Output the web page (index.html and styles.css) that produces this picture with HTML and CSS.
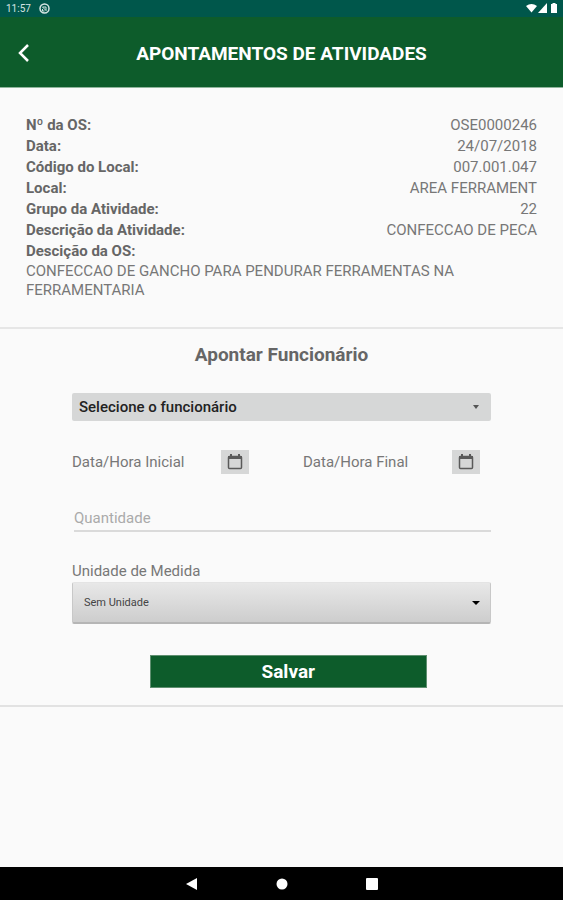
FILE: index.html
```html
<!DOCTYPE html>
<html lang="pt-BR">
<head>
    <meta charset="UTF-8">
    <meta name="viewport" content="width=device-width, initial-scale=1.0">
    <title>Apontamentos de Atividades</title>
    <link rel="stylesheet" href="styles.css">
</head>
<body>
    <div class="status-bar">
        <span>11:57</span>
        <svg class="status-app" width="11" height="11" viewBox="0 0 22 22" fill="none" stroke="#d5e5e3" stroke-width="3">
            <circle cx="11" cy="11" r="9"/>
            <path d="M7 8h7v6M7 8l8 8M7 12v4h4" stroke-width="2"/>
        </svg>
        <svg class="status-icons" width="32" height="11" viewBox="0 0 32 11" fill="#fff">
            <path d="M0 3Q5.500-1 11 3L5.500 9.500z"/>
            <path d="M21 0v10H12z"/>
            <path d="M25 1h1.500V0h3v1H31v9h-6z"/>
        </svg>
    </div>

    <header class="header">
        <button type="button" class="back" aria-label="Voltar">
            <svg width="12" height="20" viewBox="0 0 12 20" fill="none" stroke="#fff" stroke-width="2.500">
                <path d="M10 2L2 10l8 8"/>
            </svg>
        </button>
        <h1>APONTAMENTOS DE ATIVIDADES</h1>
    </header>

    <main>
        <section class="details">
            <dl>
                <div><dt>Nº da OS:</dt><dd>OSE0000246</dd></div>
                <div><dt>Data:</dt><dd>24/07/2018</dd></div>
                <div><dt>Código do Local:</dt><dd>007.001.047</dd></div>
                <div><dt>Local:</dt><dd>AREA FERRAMENT</dd></div>
                <div><dt>Grupo da Atividade:</dt><dd>22</dd></div>
                <div><dt>Descrição da Atividade:</dt><dd>CONFECCAO DE PECA</dd></div>
                <div class="long"><dt>Descição da OS:</dt><dd>CONFECCAO DE GANCHO PARA PENDURAR FERRAMENTAS NA FERRAMENTARIA</dd></div>
            </dl>
        </section>

        <form class="form" action="#" method="POST">
            <h2>Apontar Funcionário</h2>

            <div class="select employee">
                <select name="funcionario" aria-label="Funcionário">
                    <option>Selecione o funcionário</option>
                </select>
                <svg width="8" height="4" viewBox="0 0 8 4" fill="#555"><path d="M1 0h6L4 4z"/></svg>
            </div>

            <div class="dates">
                <div class="date">
                    <label for="inicial">Data/Hora Inicial</label>
                    <button type="button" id="inicial">
                        <svg width="16" height="16" viewBox="0 0 16 16">
                            <rect x="1.500" y="2.500" width="13" height="12" rx="1" fill="none" stroke="#5a5a5a" stroke-width="1.500"/>
                            <path d="M1 2h14v3H1zM3 0h2v2H3zM11 0h2v2h-2z" fill="#5a5a5a"/>
                        </svg>
                    </button>
                </div>
                <div class="date">
                    <label for="final">Data/Hora Final</label>
                    <button type="button" id="final">
                        <svg width="16" height="16" viewBox="0 0 16 16">
                            <rect x="1.500" y="2.500" width="13" height="12" rx="1" fill="none" stroke="#5a5a5a" stroke-width="1.500"/>
                            <path d="M1 2h14v3H1zM3 0h2v2H3zM11 0h2v2h-2z" fill="#5a5a5a"/>
                        </svg>
                    </button>
                </div>
            </div>

            <input type="text" class="quantity" name="quantidade" placeholder="Quantidade" aria-label="Quantidade">

            <label class="unit-label" for="unidade">Unidade de Medida</label>
            <div class="select unit">
                <select id="unidade" name="unidade">
                    <option>Sem Unidade</option>
                </select>
                <svg width="8" height="4" viewBox="0 0 8 4" fill="#000"><path d="M0 0h8L4 4z"/></svg>
            </div>

            <button type="submit" class="save">Salvar</button>
        </form>
    </main>

    <nav class="nav-bar">
        <button type="button" aria-label="Voltar">
            <svg width="12" height="12" viewBox="0 0 12 12" fill="#fff"><path d="M11 0v12L0 6z"/></svg>
        </button>
        <button type="button" aria-label="Início">
            <svg width="12" height="12" viewBox="0 0 12 12" fill="#fff"><circle cx="6" cy="6" r="5.500"/></svg>
        </button>
        <button type="button" aria-label="Recentes">
            <svg width="12" height="12" viewBox="0 0 12 12" fill="#fff"><rect width="12" height="12" rx="1"/></svg>
        </button>
    </nav>
</body>
</html>
```

FILE: styles.css
```css
* {
    box-sizing: border-box;
    margin: 0;
    padding: 0;
}

body {
    font-family: Roboto, sans-serif;
    font-size: 15px;
    color: #777;
    background-color: #fafafa;
    display: flex;
    flex-direction: column;
    min-height: 100vh;
}

button,
input,
select {
    font-family: inherit;
    border: none;
}

svg {
    display: block;
}

.status-bar {
    display: flex;
    align-items: center;
    gap: 8px;
    height: 17px;
    padding: 0 5px 0 6px;
    background-color: #00574b;
    color: #d5e5e3;
    font-size: 10px;
}

.status-icons {
    margin-left: auto;
}

.header {
    display: grid;
    grid-template-columns: 48px 1fr 48px;
    align-items: center;
    height: 71px;
    padding-top: 2px;
    background-color: #0d5c2b;
    border-bottom: 1px solid #8fb59c;
}

.back {
    display: flex;
    justify-content: center;
    padding: 12px;
    background: none;
    cursor: pointer;
}

h1 {
    color: #fff;
    font-size: 19px;
    font-weight: 700;
    text-align: center;
}

main {
    flex: 1;
}

.details {
    padding: 27px 26px;
    border-bottom: 2px solid #e6e6e6;
}

.details div {
    display: flex;
    justify-content: space-between;
    line-height: 21px;
}

.details .long {
    display: block;
}

dt {
    font-weight: 700;
    color: #666;
}

.long dd {
    line-height: 19px;
}

.form {
    display: flex;
    flex-direction: column;
    padding: 14px 72px 17px;
    border-bottom: 2px solid #e2e2e2;
}

h2 {
    color: #666;
    font-size: 19px;
    font-weight: 700;
    line-height: 24px;
    text-align: center;
    margin-bottom: 26px;
}

/* the arrow shares the grid cell of its select */
.select {
    display: grid;
    align-items: center;
}

.select select {
    grid-area: 1 / 1;
    appearance: none;
    width: 100%;
    border-radius: 2px;
}

.select svg {
    grid-area: 1 / 1;
    justify-self: end;
    margin-right: 11px;
    pointer-events: none;
}

.employee select {
    height: 28px;
    padding: 0 7px;
    background-color: #d6d7d7;
    color: #222;
    font-size: 15px;
    font-weight: 500;
}

.dates {
    display: grid;
    grid-template-columns: 177px 177px;
    justify-content: space-between;
    margin: 29px 11px 0 0;
}

.date {
    display: flex;
    align-items: center;
    justify-content: space-between;
}

.date button {
    display: flex;
    align-items: center;
    justify-content: center;
    width: 28px;
    height: 24px;
    background-color: #d6d7d7;
    cursor: pointer;
}

.quantity {
    height: 26px;
    margin: 32px 0 28px 2px;
    background: none;
    border-bottom: 2px solid #dadada;
    color: #555;
    font-size: 15px;
}

.quantity::placeholder {
    color: #aaa;
}

.unit-label {
    line-height: 22px;
}

.unit select {
    height: 42px;
    padding: 0 11px;
    background: linear-gradient(#e8e8e8, #cdcdcd);
    border: 1px solid #c8c8c8;
    border-top-color: #e4e4e4;
    border-bottom: 2px solid #b5b5b5;
    color: #444;
    font-size: 11px;
}

.save {
    width: 66%;
    height: 33px;
    margin: 31px auto 0 78px;
    background-color: #0d5c2b;
    border: 1px solid #5f8f70;
    color: #fff;
    font-size: 19px;
    font-weight: 700;
    cursor: pointer;
}

.nav-bar {
    display: flex;
    justify-content: center;
    gap: 54px;
    height: 33px;
    background-color: #000;
}

.nav-bar button {
    display: flex;
    align-items: center;
    justify-content: center;
    width: 36px;
    background: none;
    cursor: pointer;
}
```
